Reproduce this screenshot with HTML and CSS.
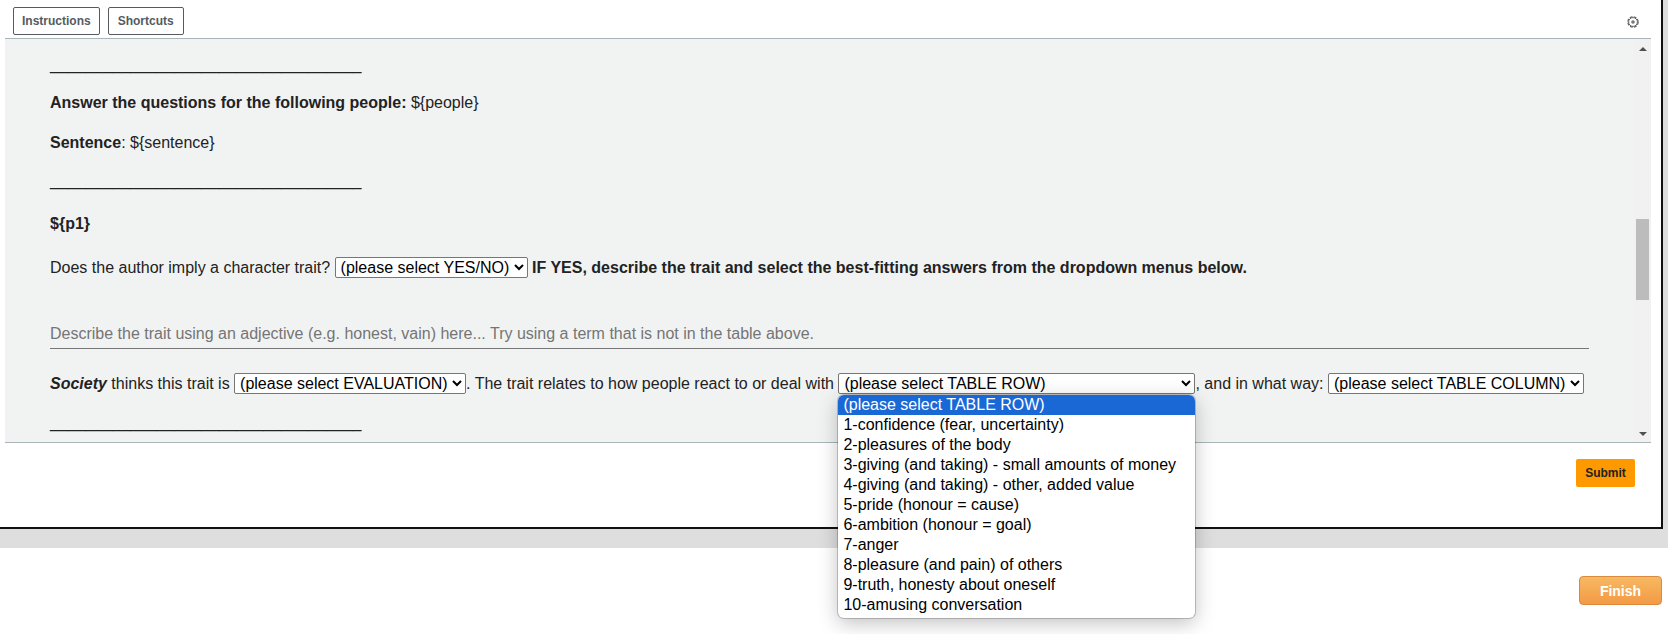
FILE: index.html
```html
<!DOCTYPE html>
<html lang="en">
<head>
    <meta charset="UTF-8">
    <meta name="viewport" content="width=device-width, initial-scale=1.0">
    <title>Task</title>
    <link rel="stylesheet" href="styles.css">
</head>
<body>

<div class="window">
<div class="frame">
    <!-- Top bar -->
    <div class="topbar">
        <div class="topbar-buttons">
            <button class="tool-button">Instructions</button>
            <button class="tool-button">Shortcuts</button>
        </div>
        <svg class="gear" width="14" height="14" viewBox="0 0 14 14" fill="none">
            <circle cx="7" cy="7" r="5.2" stroke="#666" stroke-width="1.2" stroke-dasharray="2.9 1.2"/>
            <circle cx="7" cy="7" r="4.4" stroke="#666" stroke-width="1"/>
            <circle cx="7" cy="7" r="1.8" fill="#777"/>
        </svg>
    </div>

    <!-- Question pane -->
    <div class="pane">
        <div class="content">
            <p class="rule rule-top">___________________________________</p>
            <p><b>Answer the questions for the following people:</b> ${people}</p>
            <p class="before-rule"><b>Sentence</b>: ${sentence}</p>
            <p class="rule">___________________________________</p>
            <p class="name"><b>${p1}</b></p>
            <p class="question">Does the author imply a character trait?
                <select class="pick"><option>(please select YES/NO)</option></select>
                <b>IF YES, describe the trait and select the best-fitting answers from the dropdown menus below.</b></p>
            <input class="trait" type="text" placeholder="Describe the trait using an adjective (e.g. honest, vain) here... Try using a term that is not in the table above.">
            <p class="before-rule"><b><i>Society</i></b> thinks this trait is
                <select class="pick"><option>(please select EVALUATION)</option></select>. The trait relates to how people react to or deal with
                <span class="pick-wrap">
                    <select class="pick pick-row"><option>(please select TABLE ROW)</option></select>
                    <!-- open dropdown -->
                    <span class="menu">
                        <span class="menu-item selected">(please select TABLE ROW)</span>
                        <span class="menu-item">1-confidence (fear, uncertainty)</span>
                        <span class="menu-item">2-pleasures of the body</span>
                        <span class="menu-item">3-giving (and taking) - small amounts of money</span>
                        <span class="menu-item">4-giving (and taking) - other, added value</span>
                        <span class="menu-item">5-pride (honour = cause)</span>
                        <span class="menu-item">6-ambition (honour = goal)</span>
                        <span class="menu-item">7-anger</span>
                        <span class="menu-item">8-pleasure (and pain) of others</span>
                        <span class="menu-item">9-truth, honesty about oneself</span>
                        <span class="menu-item">10-amusing conversation</span>
                    </span>
                </span>, and in what way:
                <select class="pick"><option>(please select TABLE COLUMN)</option></select></p>
            <p class="rule">___________________________________</p>
        </div>
        <div class="scrollbar">
            <div class="arrow-up"></div>
            <div class="track"><div class="thumb"></div></div>
            <div class="arrow-down"></div>
        </div>
    </div>

    <div class="submit-row">
        <button class="submit">Submit</button>
    </div>
</div>
</div>

<div class="finish-row">
    <button class="finish">Finish</button>
</div>

</body>
</html>
```
FILE: styles.css
```css
body {
    font-family: 'Liberation Sans', Arial, sans-serif;
    font-size: 16px;
    color: #222;
    margin: 0;
    background-color: #fff;
    height: 634px;
    overflow: hidden;
}

.window {
    background-color: #dedede;
    padding: 0 5px 19px 0;
}

.frame {
    height: 527px;
    border-right: 2px solid #111;
    border-bottom: 2px solid #111;
    background-color: #fff;
}

.topbar {
    height: 38px;
    display: flex;
    justify-content: space-between;
    align-items: flex-start;
    margin-left: 5px;
    margin-right: 10px;
    border-bottom: 1px solid #a9b5b9;
}

.topbar-buttons {
    display: flex;
    gap: 8px;
    padding: 7px 0 0 8px;
}

.tool-button {
    height: 28px;
    padding: 0 8px;
    background-color: #fff;
    border: 1px solid #555b61;
    border-radius: 2px;
    color: #555b61;
    font-family: inherit;
    font-size: 12px;
    font-weight: bold;
}

.tool-button + .tool-button {
    padding: 0 9px;
}

.gear {
    margin: 15px 11px 0 0;
}

.pane {
    display: flex;
    height: 403px;
    margin-left: 5px;
    margin-right: 10px;
    background-color: #f1f3f3;
    border-bottom: 1px solid #a9b5b9;
}

.content {
    flex: 1;
    padding: 17px 45px 0 45px;
    line-height: 18px;
}

.content p {
    margin: 0 0 22px 0;
    white-space: nowrap;
}

.content .rule {
    margin-bottom: 25px;
}

.content .rule-top {
    margin-bottom: 20px;
}

.content .before-rule {
    margin-bottom: 20px;
}

.content .name {
    margin-bottom: 24px;
}

.content .question {
    margin-bottom: 42px;
}

.pick {
    font-family: inherit;
    font-size: 16px;
    height: 21px;
    background-color: #fff;
    color: #000;
    border: 1px solid #767676;
    border-radius: 2px;
    padding: 0 1px;
}

.pick-wrap {
    position: relative;
    display: inline-block;
}

.pick-row {
    width: 357px;
}

.menu {
    position: absolute;
    top: 22px;
    left: 0;
    width: 357px;
    z-index: 1;
    background-color: #fff;
    border-radius: 6px;
    overflow: hidden;
    box-shadow: 0 0 0 1px rgba(0, 0, 0, 0.2), 0 5px 20px rgba(0, 0, 0, 0.25);
    color: #000;
    padding-bottom: 3px;
}

.menu-item {
    display: block;
    height: 20px;
    line-height: 20px;
    padding-left: 5px;
}

.menu-item.selected {
    background-color: #1a68d6;
    color: #fff;
}

.trait {
    display: block;
    width: 100%;
    box-sizing: border-box;
    height: 29px;
    margin: 0 0 24px 0;
    padding: 0;
    background: transparent;
    border: none;
    border-bottom: 1px solid #767676;
    font-family: inherit;
    font-size: 16px;
}

.trait::placeholder {
    color: #757575;
}

.scrollbar {
    width: 17px;
    background-color: #f1f1f1;
    display: flex;
    flex-direction: column;
    align-items: center;
}

.arrow-up {
    margin-top: 8px;
    border-left: 4px solid transparent;
    border-right: 4px solid transparent;
    border-bottom: 4px solid #505050;
}

.arrow-down {
    margin-bottom: 6px;
    border-left: 4px solid transparent;
    border-right: 4px solid transparent;
    border-top: 4px solid #505050;
}

.track {
    flex: 1;
    width: 13px;
    padding-top: 168px;
    box-sizing: border-box;
}

.thumb {
    height: 81px;
    background-color: #bcbcbc;
}

.submit-row {
    display: flex;
    justify-content: flex-end;
    padding: 16px 26px 0 0;
}

.submit {
    width: 59px;
    height: 28px;
    padding: 0;
    background-color: #ff9900;
    border: none;
    border-radius: 2px;
    color: #222;
    font-family: inherit;
    font-size: 12px;
    font-weight: bold;
}

.finish-row {
    display: flex;
    justify-content: flex-end;
    padding: 28px 6px 0 0;
}

.finish {
    width: 83px;
    height: 29px;
    padding: 0;
    background: linear-gradient(#f8b862, #f39a45);
    border: 1px solid #d98a3f;
    border-radius: 4px;
    color: #fff;
    font-family: inherit;
    font-size: 14px;
    font-weight: bold;
}
```
